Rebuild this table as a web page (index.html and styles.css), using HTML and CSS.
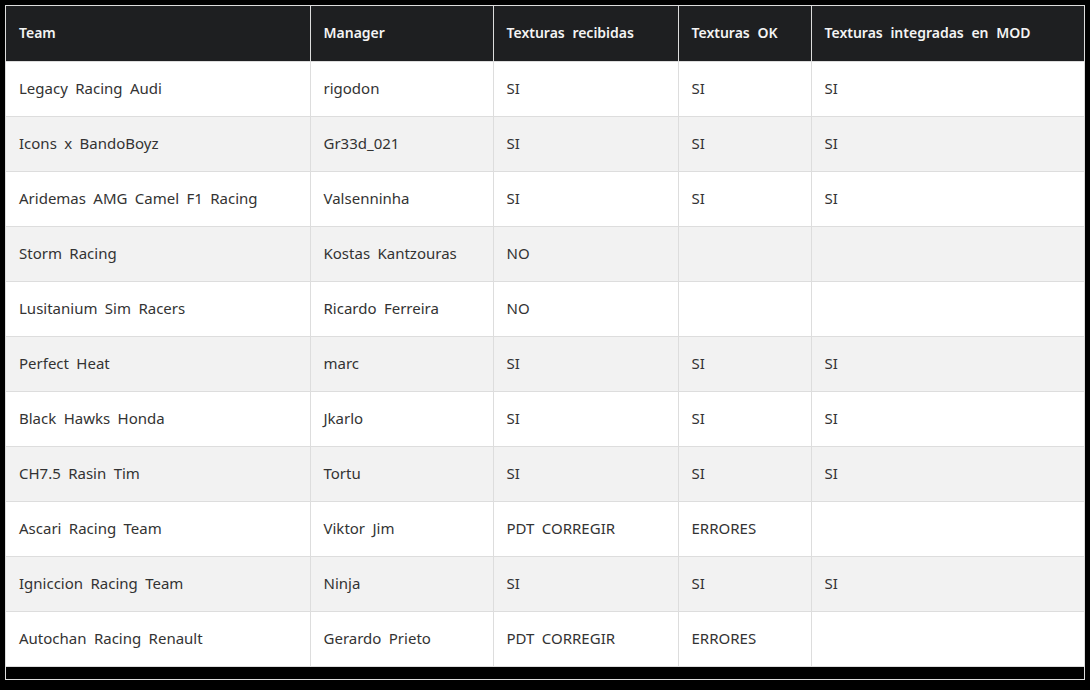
FILE: index.html
```html
<!DOCTYPE html>
<html lang="es">
<head>
<meta charset="utf-8">
<title>Texturas</title>
<link rel="stylesheet" href="styles.css">
</head>
<body>
<div class="frame">
  <table class="grid">
    <colgroup>
      <col class="c1"><col class="c2"><col class="c3"><col class="c4"><col class="c5">
    </colgroup>
    <thead>
      <tr><th>Team</th><th>Manager</th><th>Texturas recibidas</th><th>Texturas OK</th><th>Texturas integradas en MOD</th></tr>
    </thead>
    <tbody>
      <tr><td>Legacy Racing Audi</td><td>rigodon</td><td>SI</td><td>SI</td><td>SI</td></tr>
      <tr><td>Icons x BandoBoyz</td><td>Gr33d_021</td><td>SI</td><td>SI</td><td>SI</td></tr>
      <tr><td>Aridemas AMG Camel F1 Racing</td><td>Valsenninha</td><td>SI</td><td>SI</td><td>SI</td></tr>
      <tr><td>Storm Racing</td><td>Kostas Kantzouras</td><td>NO</td><td></td><td></td></tr>
      <tr><td>Lusitanium Sim Racers</td><td>Ricardo Ferreira</td><td>NO</td><td></td><td></td></tr>
      <tr><td>Perfect Heat</td><td>marc</td><td>SI</td><td>SI</td><td>SI</td></tr>
      <tr><td>Black Hawks Honda</td><td>Jkarlo</td><td>SI</td><td>SI</td><td>SI</td></tr>
      <tr><td>CH7.5 Rasin Tim</td><td>Tortu</td><td>SI</td><td>SI</td><td>SI</td></tr>
      <tr><td>Ascari Racing Team</td><td>Viktor Jim</td><td>PDT CORREGIR</td><td>ERRORES</td><td></td></tr>
      <tr><td>Igniccion Racing Team</td><td>Ninja</td><td>SI</td><td>SI</td><td>SI</td></tr>
      <tr><td>Autochan Racing Renault</td><td>Gerardo Prieto</td><td>PDT CORREGIR</td><td>ERRORES</td><td></td></tr>
    </tbody>
  </table>
</div>
</body>
</html>
```
FILE: styles.css
```css
html, body {
  margin: 0;
  padding: 0;
  background: #000;
}
body {
  font-family: "Noto Sans", "DejaVu Sans", sans-serif;
  font-size: 15px;
  color: #333;
}
.frame {
  margin: 5px 0 0 5px;
  width: 1078px;
  border: 1px solid #ddd;
  padding-bottom: 12px;
  background: #000;
}
.grid {
  width: 100%;
  border-collapse: collapse;
  table-layout: fixed;
}
.c1 { width: 304px; }
.c2 { width: 183px; }
.c3 { width: 185px; }
.c4 { width: 133px; }
.c5 { width: auto; }
.grid th,
.grid td {
  height: 55px;
  padding: 0 13px 2px 13px;
  text-align: left;
  vertical-align: middle;
  border-right: 1px solid #ddd;
  border-bottom: 1px solid #ddd;
  word-spacing: 3.5px;
  white-space: nowrap;
  box-sizing: border-box;
}
.grid th {
  padding-bottom: 1px;
}
.grid th:last-child,
.grid td:last-child {
  border-right: none;
}
.grid th {
  background: #1e1f21;
  color: #f4f4f4;
  font-size: 14px;
  font-weight: 600;
  word-spacing: 4px;
}
.grid tbody tr { background: #fff; }
.grid tbody tr:nth-child(even) { background: #f2f2f2; }
```
